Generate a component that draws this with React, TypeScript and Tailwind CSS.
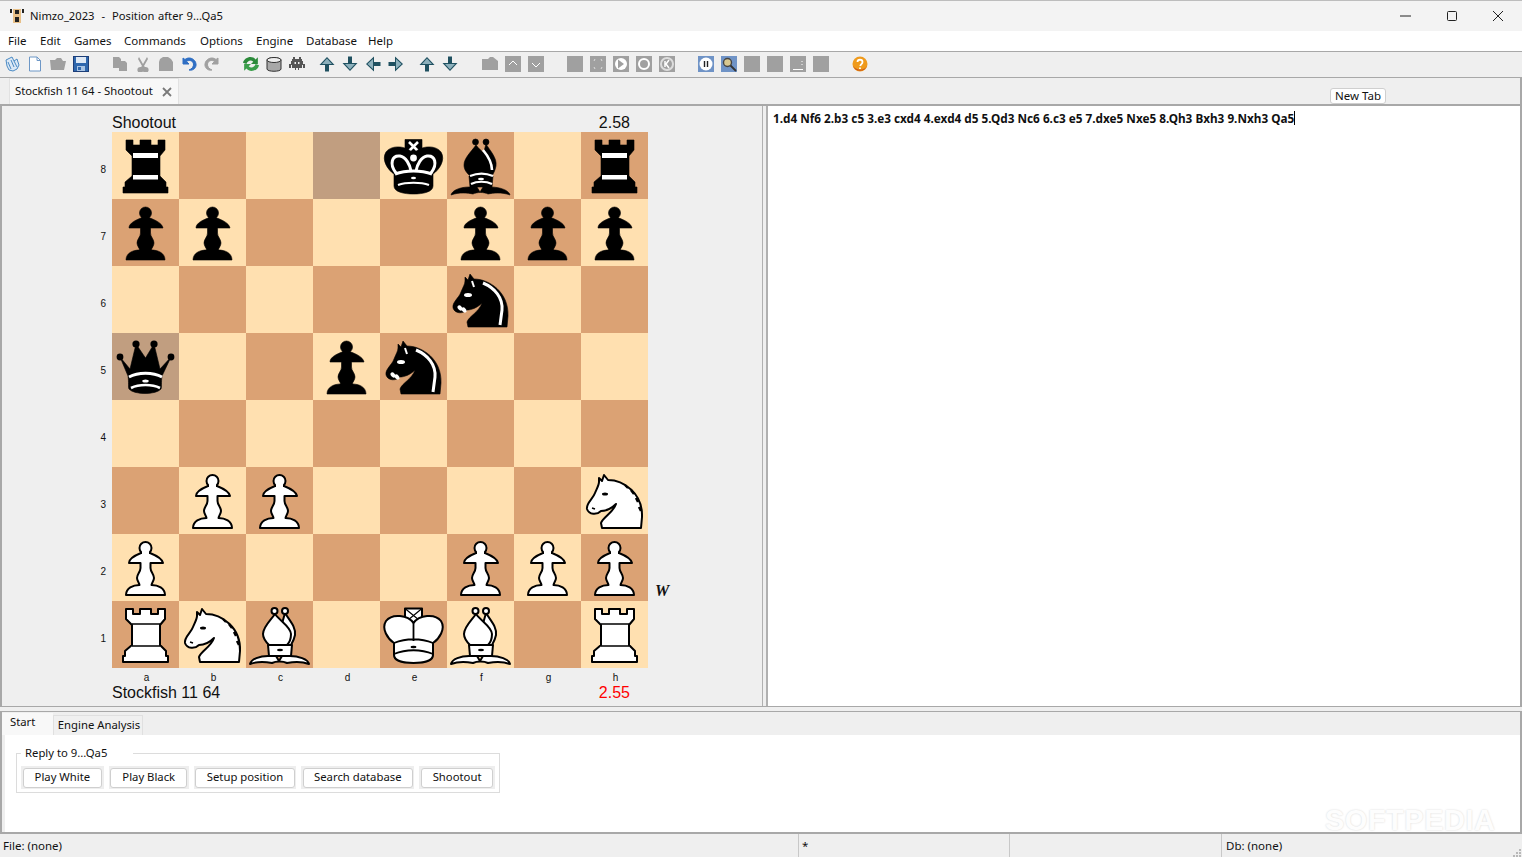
import type { ReactNode } from "react";

const BOARD = [
  "r...kb.r",
  "pp...ppp",
  ".....n..",
  "q..pn...",
  "........",
  ".PP....N",
  "P....PPP",
  "RNB.KB.R",
];
const HIGHLIGHT = ["3-0", "0-3"];

const MENUS = [
  { label: "File", w: "w-[32px]" },
  { label: "Edit", w: "w-[34px]" },
  { label: "Games", w: "w-[50px]" },
  { label: "Commands", w: "w-[76px]" },
  { label: "Options", w: "w-[56px]" },
  { label: "Engine", w: "w-[50px]" },
  { label: "Database", w: "w-[62px]" },
  { label: "Help", w: "w-[40px]" },
];

const ROOK = "M14 8H21V13H28V8H39V13H46V8H53V18L48 24V44L54 50V55H56V61H11V55H13V50L20 44V24L14 18Z";
const KNIGHT =
  "M23 8L27 13C42 13 62 26 61 50L60 61L21 61L20 56C22 50 32 46 35 37C30 42 24 44 20 44C16 48 8 48 6 42C5 36 12 32 14 26C16 21 18 18 18 15L18 11L21 14Z";
const PAWN =
  "M17 29C17 24 24 21 29 19H38C43 21 50 24 51 29H38.5V34C38.5 38 42 40 42 44C42 47 39.5 49 39.5 51C46 51 53 54 53 61H14C14 54 21 51 27.5 51C27.5 49 25 47 25 44C25 40 28.5 38 28.5 34V29Z";
const KING_BODY =
  "M33.5 22C28 14 12 12 6 20C1 28 8 38 14 42V54C14 60 24 62 33.5 62C43 62 53 60 53 54V42C59 38 66 28 61 20C55 12 39 14 33.5 22Z";
const QUEEN = "M24 11L18 36L8 24L16 43C17 50 16 54 17 56C22 62 44 62 49 56C50 54 49 50 50 43L59 24L48 36L42 11L33.5 25Z";
const MITRE_BACK = "M39 12C44 20 50 26 49 34C48 39 46 42 45 44H30Z";
const MITRE_FRONT = "M29 13C24 20 17 26 17 33C17 38 20 41 23 44H41C44 41 45 38 45 33C45 26 34 20 29 13Z";
const BISHOP_FEET = "M4 63C5 58 14 55 22 55H30L33 60L36 55H44C52 55 62 58 63 63C55 60 46 61 41 62C37 60 30 60 26 62C21 61 12 60 4 63Z";

function Piece({ code }: { code: string }) {
  const black = code === code.toLowerCase();
  const fill = black ? "#000" : "#fff";
  const line = black ? "#fff" : "#000";
  const shape = { fill, stroke: "#000", strokeWidth: black ? 0.6 : 2, strokeLinejoin: "round" as const };
  const kind = code.toLowerCase();
  return (
    <svg viewBox="0 0 67 67" className="w-full h-full">
      {kind === "r" && (
        <>
          <path d={ROOK} {...shape} />
          {black ? (
            <>
              <rect x="21" y="21" width="25" height="5" fill="#fff" />
              <rect x="21" y="43" width="25" height="4.5" fill="#fff" />
            </>
          ) : (
            <path d="M20 23H48M20 45H48" stroke="#000" strokeWidth="1.6" />
          )}
        </>
      )}
      {kind === "p" && (
        <>
          <path d={PAWN} {...shape} />
          <circle cx="33.5" cy="14" r="6" {...shape} />
          <path d="M30 17H37V22H30Z" fill={fill} />
        </>
      )}
      {kind === "n" && (
        <>
          <path d={KNIGHT} {...shape} />
          {black ? (
            <>
              <path d="M36 17C48 22 56 32 55 44L53 59" stroke="#fff" strokeWidth="3" fill="none" />
              <ellipse cx="21" cy="29" rx="4" ry="2" fill="#fff" />
              <ellipse cx="13" cy="42" rx="2" ry="3" fill="#fff" transform="rotate(-40 13 42)" />
              <ellipse cx="17" cy="44" rx="2" ry="3" fill="#fff" transform="rotate(-40 17 44)" />
              <path d="M25 15L27 21" stroke="#fff" strokeWidth="2" />
            </>
          ) : (
            <>
              <ellipse cx="24" cy="27" rx="3" ry="1.5" fill="#000" />
              <path d="M11 41L14 42" stroke="#000" strokeWidth="1.5" />
              <path d="M44 18L47 21M50 23L53 27M55 31L57 35M58 40L60 44" stroke="#000" strokeWidth="2.4" />
            </>
          )}
        </>
      )}
      {kind === "b" && (
        <>
          <path d={MITRE_BACK} {...shape} />
          <path d={MITRE_FRONT} {...shape} />
          <circle cx="28.5" cy="10" r="3" {...shape} />
          <circle cx="39" cy="10" r="3" {...shape} />
          <path d="M22 44H46L45 55H23Z" {...shape} />
          <path d={BISHOP_FEET} {...shape} />
          {black ? (
            <>
              <path d="M36 18C41 24 45 30 45 38" stroke="#fff" strokeWidth="2.6" fill="none" />
              <path d="M23 44C30 41 39 41 46 44M24 52C30 49 39 49 45 52" stroke="#fff" strokeWidth="2.2" fill="none" />
              <ellipse cx="34" cy="47" rx="3" ry="1.2" fill="#fff" />
            </>
          ) : (
            <ellipse cx="34" cy="49" rx="3" ry="1.2" fill="#000" />
          )}
        </>
      )}
      {kind === "k" && (
        <>
          <rect x="25" y="7.5" width="17" height="14" {...shape} />
          <path d={black ? "M29 10L38 19M38 10L29 19" : "M25 7.5L42 21.5M42 7.5L25 21.5"} stroke={line} strokeWidth={black ? 2.6 : 1.2} />
          <path d={KING_BODY} {...shape} />
          {black ? (
            <>
              <circle cx="33.5" cy="26" r="3.4" fill="#fff" />
              <path d="M16 41C9 32 12 23 20 24C26 25 30 33 31 39" stroke="#fff" strokeWidth="3" fill="none" />
              <path d="M51 41C58 32 55 23 47 24C41 25 37 33 36 39" stroke="#fff" strokeWidth="3" fill="none" />
              <path d="M15 42C26 38 41 38 52 42" stroke="#fff" strokeWidth="3" fill="none" />
              <path d="M18 53C26 50 41 50 49 53" stroke="#fff" strokeWidth="2.2" fill="none" />
              <ellipse cx="33.5" cy="46" rx="2.5" ry="1.2" fill="#fff" />
            </>
          ) : (
            <>
              <path d="M33.5 22V40M14 42C26 37 41 37 53 42M14 53C26 48 41 48 53 53" stroke="#000" strokeWidth="1.8" fill="none" />
              <ellipse cx="33.5" cy="46" rx="3" ry="1.2" fill="#000" />
            </>
          )}
        </>
      )}
      {kind === "q" && (
        <>
          <path d={QUEEN} {...shape} />
          <circle cx="24" cy="11" r="3.6" fill="#000" />
          <circle cx="42" cy="11" r="3.6" fill="#000" />
          <circle cx="8" cy="24" r="3.4" fill="#000" />
          <circle cx="59" cy="24" r="3.4" fill="#000" />
          <path d="M17 44C26 39 41 39 50 44" stroke="#fff" strokeWidth="2.8" fill="none" />
          <path d="M19 55C27 51 40 51 48 55" stroke="#fff" strokeWidth="2.6" fill="none" />
          <ellipse cx="33.5" cy="48" rx="3.2" ry="1.5" fill="#fff" />
        </>
      )}
    </svg>
  );
}

function Board() {
  return (
    <div className="grid grid-cols-[repeat(8,67px)] grid-rows-[repeat(8,67px)]">
      {BOARD.map((row, y) =>
        row.split("").map((code, x) => {
          const dark = (x + y) % 2 === 1;
          const hit = HIGHLIGHT.includes(x + "-" + y);
          return (
            <div key={x + "-" + y} className={hit ? "bg-[#c19e80]" : dark ? "bg-[#dba274]" : "bg-[#ffe0b0]"}>
              {code !== "." && <Piece code={code} />}
            </div>
          );
        }),
      )}
    </div>
  );
}

function Arrow({ dir }: { dir: "up" | "down" | "left" | "right" }) {
  const rot = { up: 0, down: 180, left: 270, right: 90 }[dir];
  return (
    <svg viewBox="0 0 16 16" className="w-4 h-4" style={{ transform: "rotate(" + rot + "deg)" }}>
      <path d="M8 1L15.5 9H10V15.5H6V9H.5Z" fill="#1f5060" />
      <path d="M8 2.5L13 8H3Z" fill="#8db0bc" />
    </svg>
  );
}

function Gray({ blue, children }: { blue?: boolean; children?: ReactNode }) {
  return (
    <svg viewBox="0 0 16 16" className={blue ? "w-4 h-4 bg-[#6f93c6]" : "w-4 h-4 bg-[#a0a0a0]"}>
      {children}
    </svg>
  );
}

function Shape({ d, fill = "#a0a0a0" }: { d: string; fill?: string }) {
  return (
    <svg viewBox="0 0 16 16" className="w-4 h-4">
      <path d={d} fill={fill} />
    </svg>
  );
}

function Toolbar() {
  return (
    <div className="h-[26px] flex items-center pl-[4px] pb-[1px] bg-[#efefef] border-b border-[#a8a8a8] shrink-0">
      <div className="flex gap-[7px]">
        <svg viewBox="0 0 16 16" className="w-4 h-4">
          <path d="M2 4L8 1L10 5L13 3L15 9L13 13L9 15L5 14L3 10Z" fill="#dbe8f5" stroke="#4a8ac4" />
          <path d="M7 4L10 11M4 6L7 13M10 5L13 11" stroke="#4a8ac4" />
        </svg>
        <svg viewBox="0 0 16 16" className="w-4 h-4">
          <path d="M2.5 1H10L13.5 4.5V15H2.5Z" fill="#fff" stroke="#6d97c6" />
          <path d="M10 1V4.5H13.5" fill="none" stroke="#6d97c6" />
        </svg>
        <Shape d="M0 4H5L7 2H11L13 5H16L14 14H1Z" />
        <svg viewBox="0 0 16 16" className="w-4 h-4">
          <rect x=".5" y=".5" width="15" height="15" fill="#2f67ad" stroke="#1d3e78" />
          <rect x="3" y="1" width="10" height="6" fill="#dfe9f5" />
          <rect x="4" y="10" width="8" height="5" fill="#a9c4e4" />
          <rect x="5" y="11" width="3" height="3" fill="#2f67ad" />
        </svg>
      </div>
      <div className="flex gap-[7px] ml-[23px]">
        <Shape d="M1 1H7L9 3V5H13L15 7V15H7V12H1Z" />
        <svg viewBox="0 0 16 16" className="w-4 h-4">
          <path d="M4 1L8 8L12 1L13 3L9 10L10 11A3 3 0 1 1 8 12.5A3 3 0 1 1 6 11L7 10L3 3Z" fill="#a0a0a0" />
        </svg>
        <Shape d="M2 3L5 1H10L13 3L15 6V15H1V6Z" />
        <svg viewBox="0 0 16 16" className="w-4 h-4">
          <path d="M2 2V8H8L5.5 5.5C8 3.5 12 4.5 12.5 8C12.8 10.5 11 13 8 14C13 15 15.5 11 15 8C14.5 3 8 0 4 3.5Z" fill="#2f6fc4" stroke="#2f6fc4" />
        </svg>
        <svg viewBox="0 0 16 16" className="w-4 h-4 -scale-x-100">
          <path d="M2 2V8H8L5.5 5.5C8 3.5 12 4.5 12.5 8C12.8 10.5 11 13 8 14C13 15 15.5 11 15 8C14.5 3 8 0 4 3.5Z" fill="#a0a0a0" stroke="#a0a0a0" />
        </svg>
      </div>
      <div className="flex gap-[7px] ml-[23px]">
        <svg viewBox="1 1 14 14" className="w-4 h-4">
          <path d="M1 7C2 2 9 0 12 4L14 2V8H8L10 6C8 4 5 5 4 8Z" fill="#2b8a3a" />
          <path d="M15 9C14 14 7 16 4 12L2 14V8H8L6 10C8 12 11 11 12 8Z" fill="#3a9e4a" />
        </svg>
        <svg viewBox="0 0 16 16" className="w-4 h-4">
          <path d="M1 4C1 1 15 1 15 4V13C15 16 1 16 1 13Z" fill="#a8a8a8" stroke="#333" />
          <ellipse cx="8" cy="4" rx="7" ry="2.5" fill="#eee" stroke="#333" />
        </svg>
        <svg viewBox="0 0 16 16" className="w-4 h-4">
          <path d="M4 1H6V3H10V1H12V3H13V5H14V8H16V12H14V9H13V12H10V14H9V12H7V14H6V12H3V9H2V12H0V8H2V5H3V3H4ZM5.5 6V8H7V6ZM9 6V8H10.5V6Z" fill="#555" fillRule="evenodd" />
        </svg>
      </div>
      <div className="flex gap-[7px] ml-[14px]">
        <Arrow dir="up" />
        <Arrow dir="down" />
        <Arrow dir="left" />
        <Arrow dir="right" />
      </div>
      <div className="flex gap-[7px] ml-[15px]">
        <Arrow dir="up" />
        <Arrow dir="down" />
      </div>
      <div className="flex gap-[7px] ml-[24px]">
        <Shape d="M0 3H6L8 1H11L16 5V14H0Z" />
        <Gray>
          <path d="M4 9L8 5L12 9" stroke="#fff" fill="none" />
        </Gray>
        <Gray>
          <path d="M4 7L8 11L12 7" stroke="#fff" fill="none" />
        </Gray>
      </div>
      <div className="flex gap-[7px] ml-[23px]">
        <Gray />
        <Gray>
          <path d="M5 3L4 5M11 3L12 5M5 13L4 11M11 13L12 11" stroke="#ddd" />
        </Gray>
        <Gray>
          <circle cx="8" cy="8" r="6" fill="#fff" />
          <path d="M5 3.5L11 8L5 12.5Z" fill="#a0a0a0" />
        </Gray>
        <Gray>
          <circle cx="8" cy="8" r="5" fill="none" stroke="#fff" strokeWidth="2" />
        </Gray>
        <Gray>
          <circle cx="8" cy="8" r="6" fill="none" stroke="#ddd" strokeWidth="2" />
          <path d="M6 5V11M10 4L7 8L10 12" stroke="#fff" strokeWidth="1.5" fill="none" />
        </Gray>
      </div>
      <div className="flex gap-[7px] ml-[23px]">
        <Gray blue>
          <circle cx="8" cy="8" r="6.5" fill="#fff" />
          <path d="M6.5 5V11M9.5 5V11" stroke="#222" strokeWidth="1.4" />
        </Gray>
        <Gray blue>
          <circle cx="6.5" cy="6.5" r="4" fill="#d8c890" stroke="#444" strokeWidth="1.4" />
          <path d="M9.5 9.5L15 15" stroke="#333" strokeWidth="1.8" />
        </Gray>
        <Gray />
        <Gray />
        <Gray>
          <path d="M3 13.5H13M12 5V6M12 8V9" stroke="#fff" />
        </Gray>
        <Gray />
      </div>
      <svg viewBox="0 0 16 16" className="w-4 h-4 ml-[23px]">
        <circle cx="8" cy="8" r="7.5" fill="#ef9a1c" />
        <path d="M1 10A7.5 7.5 0 0 0 15 10C12 15 5 15 1 10Z" fill="#c9541a" />
        <path d="M5.5 6C5.5 3 10.5 3 10.5 6C10.5 8 8.5 8 8.2 10M8 11.5V13" stroke="#fff" strokeWidth="1.8" fill="none" />
      </svg>
    </div>
  );
}

function Btn({ label, w }: { label: string; w: string }) {
  return (
    <div className={"h-[23px] bg-[#eeeeee] p-[1.5px] " + w}>
      <div className="h-full bg-white border border-[#cfcfcf] rounded-[3px] flex items-center justify-center">{label}</div>
    </div>
  );
}

export default function App() {
  return (
    <div className="relative w-[1522px] h-[857px] overflow-hidden bg-[#efefef] text-[12px] text-[#111] font-['Noto_Sans',sans-serif] flex flex-col">
      <div className="h-[31px] bg-[#f3f3f3] border-t border-[#bdbdbd] flex items-center shrink-0">
        <svg viewBox="0 0 16 16" className="w-4 h-4 ml-[9px]">
          <rect x="4" y="1" width="8" height="14" fill="#e8c088" />
          <path d="M1 1H3V5H1ZM13 1H15V5H13ZM6 2H10V6H6ZM6 9H10V14H6Z" fill="#222" />
        </svg>
        <span className="ml-[5px] text-[11.2px] whitespace-pre [word-spacing:0.6px]">Nimzo_2023  -  Position after 9...Qa5</span>
        <div className="ml-auto flex items-center">
          <svg viewBox="0 0 12 12" className="w-3 h-3 mr-[34px]">
            <path d="M0 6H11" stroke="#222" />
          </svg>
          <svg viewBox="0 0 12 12" className="w-3 h-3 mr-[34px]">
            <rect x="1.5" y="1.5" width="9" height="9" rx="1" fill="none" stroke="#222" />
          </svg>
          <svg viewBox="0 0 12 12" className="w-3 h-3 mr-[18px]">
            <path d="M1 1L11 11M11 1L1 11" stroke="#222" />
          </svg>
        </div>
      </div>

      <div className="h-[21px] bg-white border-b border-[#a8a8a8] flex items-center pl-[8px] shrink-0 text-[11.5px]">
        {MENUS.map((m) => (
          <span key={m.label} className={m.w}>
            {m.label}
          </span>
        ))}
      </div>

      <Toolbar />

      <div className="h-[28px] flex items-end justify-between pl-[9px] pr-[134px] border-b-2 border-r-2 border-[#a8a8a8] shrink-0 bg-[#efefef]">
        <div className="w-[170px] h-[26px] bg-[#f8f8f8] border border-[#e2e2e2] border-b-0 flex items-center pl-[5px] pr-[6px] justify-between text-[11.3px]">
          <span>Stockfish 11 64 - Shootout</span>
          <svg viewBox="0 0 10 10" className="w-[10px] h-[10px]">
            <path d="M1 1L9 9M9 1L1 9" stroke="#7a7a7a" strokeWidth="1.8" />
          </svg>
        </div>
        <div className="w-[56px] h-[16px] bg-white border border-[#cfcfcf] rounded-[3px] flex items-center justify-center text-[11.5px]">New Tab</div>
      </div>

      <div className="h-[601px] flex shrink-0 border-l-2 border-r-2 border-b border-[#a8a8a8]">
        <div className="w-[760px] bg-[#efefef] font-['Liberation_Sans',sans-serif] grid grid-cols-[110px_536px_1fr] grid-rows-[26px_536px_16px_16px]">
          <div />
          <div className="flex items-end justify-between pr-[18px] text-[16px] leading-[18px]">
            <span>Shootout</span>
            <span>2.58</span>
          </div>
          <div />
          <div className="flex flex-col items-end pr-[6px] text-[10px]">
            {[8, 7, 6, 5, 4, 3, 2, 1].map((n) => (
              <div key={n} className="h-[67px] flex items-center pt-[7px]">
                {n}
              </div>
            ))}
          </div>
          <Board />
          <div className="pl-[7px] pt-[449px] font-['Liberation_Serif',serif] font-bold italic text-[16px] leading-[20px]">W</div>
          <div />
          <div className="grid grid-cols-[repeat(8,67px)] pl-[1px] text-[10px] leading-[20px] text-center">
            {"abcdefgh".split("").map((f) => (
              <span key={f}>{f}</span>
            ))}
          </div>
          <div />
          <div />
          <div className="flex items-start justify-between pr-[18px] text-[16px] leading-[18px]">
            <span>Stockfish 11 64</span>
            <span className="text-[#ff0000]">2.55</span>
          </div>
        </div>
        <div className="w-[6px] border-r-2 border-l border-[#b0b0b0]" />
        <div className="flex-1 bg-white pl-[5px] pt-[3px] font-bold text-[11.75px] leading-[18px] flex items-start">
          <span>1.d4 Nf6 2.b3 c5 3.e3 cxd4 4.exd4 d5 5.Qd3 Nc6 6.c3 e5 7.dxe5 Nxe5 8.Qh3 Bxh3 9.Nxh3 Qa5</span>
          <span className="w-px h-[14px] mt-[2px] bg-black" />
        </div>
      </div>

      <div className="h-[4px] shrink-0" />

      <div className="h-[121px] shrink-0 border-t border-[#a8a8a8] border-l-2 border-r-2 flex flex-col text-[11.3px]">
        <div className="h-[23px] flex items-end">
          <div className="w-[51px] h-[22px] bg-[#f8f8f8] pl-[8px] leading-[18px]">Start</div>
          <div className="w-[90px] h-[20px] bg-[#f0f0f0] border border-[#e0e0e0] border-b-0 text-center leading-[18px] pl-[2px]">Engine Analysis</div>
        </div>
        <div className="flex-1 bg-white ml-[3px] pl-[11px] pt-[18px]">
          <div className="relative w-[484px] h-[40px] border border-[#dcdcdc] px-[4px] pt-[12px] flex gap-[5px]">
            <span className="absolute -top-[9px] left-[4px] bg-white pl-[4px] pr-[26px] leading-[16px]">Reply to 9...Qa5</span>
            <Btn label="Play White" w="w-[83px]" />
            <Btn label="Play Black" w="w-[80px]" />
            <Btn label="Setup position" w="w-[103px]" />
            <Btn label="Search database" w="w-[113px]" />
            <Btn label="Shootout" w="w-[76px]" />
          </div>
        </div>
      </div>

      <div className="flex-1 border-t-2 border-b border-[#a8a8a8] flex items-center text-[11.5px] relative">
        <div className="w-[798px] pl-[3px]">File: (none)</div>
        <div className="w-[211px] h-full border-l border-[#c8c8c8] pl-[3px] leading-[24px]">*</div>
        <div className="w-[212px] h-full border-l border-[#c8c8c8]" />
        <div className="h-full border-l border-[#c8c8c8] pl-[4px] leading-[24px]">Db: (none)</div>
        <div className="absolute right-[1px] bottom-[1px] grid grid-cols-3 gap-[1px]">
          {[0, 1, 2, 3, 4, 5, 6, 7, 8].map((i) => (
            <span key={i} className={i === 0 || i === 1 || i === 3 ? "w-[2px] h-[2px]" : "w-[2px] h-[2px] bg-[#b8b8b8]"} />
          ))}
        </div>
      </div>

      <span className="absolute left-[1325px] top-[803px] text-[29px] leading-[34px] font-bold font-['Liberation_Sans',sans-serif] text-[#fdfdfd] tracking-[0.5px] [text-shadow:0_0_2px_#d4d4d4]">
        SOFTPEDIA
      </span>
    </div>
  );
}
